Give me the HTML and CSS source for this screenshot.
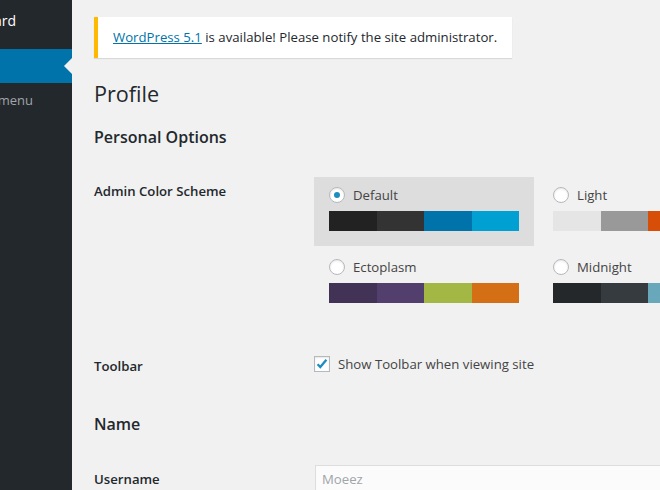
FILE: index.html
```html
<!DOCTYPE html>
<html lang="en">
  <head>
    <meta charset="UTF-8" />
    <title>Profile</title>
    <link rel="stylesheet" href="styles.css">
  </head>
  <body>
    <div class="layout">
      <div class="sidebar">
        <div class="menu-item">Dashboard</div>
        <div class="menu-item current">Profile</div>
        <div class="collapse">Collapse menu</div>
      </div>

      <div class="content">
        <div class="update-nag">
          <a href="#">WordPress 5.1</a> is available! Please notify the site administrator.
        </div>

        <h1>Profile</h1>

        <h2>Personal Options</h2>
        <table class="form-table">
          <tr>
            <th>Admin Color Scheme</th>
            <td>
              <div class="schemes">
                <div class="color-option selected">
                  <label class="option-label"><span class="radio checked"></span>Default</label>
                  <div class="palette">
                    <span style="background:#222"></span><span style="background:#333"></span><span style="background:#0073aa"></span><span style="background:#00a0d2"></span>
                  </div>
                </div>
                <div class="color-option">
                  <label class="option-label"><span class="radio"></span>Light</label>
                  <div class="palette">
                    <span style="background:#e5e5e5"></span><span style="background:#999"></span><span style="background:#d64e07"></span><span style="background:#04a4cc"></span>
                  </div>
                </div>
                <div class="color-option">
                  <label class="option-label"><span class="radio"></span>Blue</label>
                  <div class="palette">
                    <span style="background:#096484"></span><span style="background:#4796b3"></span><span style="background:#52accc"></span><span style="background:#74b6ce"></span>
                  </div>
                </div>
                <div class="color-option">
                  <label class="option-label"><span class="radio"></span>Coffee</label>
                  <div class="palette">
                    <span style="background:#46403c"></span><span style="background:#59524c"></span><span style="background:#c7a589"></span><span style="background:#9ea476"></span>
                  </div>
                </div>
                <div class="color-option">
                  <label class="option-label"><span class="radio"></span>Ectoplasm</label>
                  <div class="palette">
                    <span style="background:#413256"></span><span style="background:#523f6d"></span><span style="background:#a3b745"></span><span style="background:#d46f15"></span>
                  </div>
                </div>
                <div class="color-option">
                  <label class="option-label"><span class="radio"></span>Midnight</label>
                  <div class="palette">
                    <span style="background:#25282b"></span><span style="background:#363b3f"></span><span style="background:#69a8bb"></span><span style="background:#e14d43"></span>
                  </div>
                </div>
              </div>
            </td>
          </tr>
          <tr>
            <th>Toolbar</th>
            <td>
              <label class="check-label">
                <span class="checkbox">
                  <svg width="14" height="14" viewBox="0 0 14 14"><path d="M2.6 7.2l2.7 2.8 6.1-7.3" fill="none" stroke="#1e8cbe" stroke-width="2.3"/></svg>
                </span>
                Show Toolbar when viewing site
              </label>
            </td>
          </tr>
        </table>

        <h2 class="section-name">Name</h2>
        <table class="form-table">
          <tr>
            <th>Username</th>
            <td><div class="text-input">Moeez</div></td>
          </tr>
        </table>
      </div>
    </div>
  </body>
</html>
```

FILE: styles.css
```css
body {
  margin: 0;
  background-color: #f1f1f1;
  color: #444;
  font-family: "Open Sans", "Noto Sans", sans-serif;
  font-size: 13px;
  overflow: hidden;
}
.layout {
  display: flex;
  height: 490px;
}
.sidebar {
  flex: 0 0 72px;
  background-color: #23282d;
  overflow: hidden;
}
.menu-item {
  display: flex;
  justify-content: flex-end;
  white-space: nowrap;
  font-size: 14px;
  line-height: 18px;
  color: #fff;
  padding-right: 56px;
}
.menu-item:first-child {
  padding-top: 12px;
  height: 37px;
}
.menu-item.current {
  position: relative;
  height: 34px;
  background-color: #0073aa;
  color: #0073aa;
  align-items: center;
}
.menu-item.current::after {
  content: "";
  position: absolute;
  right: 0;
  top: 50%;
  margin-top: -8px;
  border: 8px solid transparent;
  border-right-color: #f1f1f1;
}
.collapse {
  display: flex;
  justify-content: flex-end;
  white-space: nowrap;
  margin-top: 8px;
  padding-right: 39px;
  line-height: 18px;
  color: #a0a5aa;
}
.content {
  flex: 1;
  padding-left: 22px;
  min-width: 0;
}
.update-nag {
  display: inline-block;
  margin-top: 17px;
  padding: 11px 15px;
  background-color: #fff;
  border-left: 4px solid #ffb900;
  box-shadow: 0 1px 1px 0 rgba(0, 0, 0, 0.1);
  font-size: 13.2px;
  line-height: 19px;
  color: #23282d;
}
.update-nag a {
  color: #0073aa;
}
h1 {
  margin: 0;
  padding: 21px 0 4px;
  font-size: 21.6px;
  font-weight: 400;
  line-height: 29px;
  color: #23282d;
}
h2 {
  margin: 14px 0 14px;
  font-size: 16px;
  font-weight: 600;
  line-height: 22px;
  color: #23282d;
}
h2.section-name {
  margin: 18px 0 15px;
}
.form-table {
  border-collapse: collapse;
}
.form-table th {
  width: 200px;
  min-width: 200px;
  padding: 20px 10px 20px 0;
  vertical-align: top;
  text-align: left;
  font-size: 13.2px;
  font-weight: 600;
  line-height: 18px;
  color: #23282d;
}
.form-table td {
  padding: 15px 10px;
  vertical-align: top;
  font-size: 13.2px;
  line-height: 20px;
}
.schemes {
  display: grid;
  grid-template-columns: repeat(4, 220px);
  column-gap: 4px;
  padding-bottom: 1px;
}
.color-option {
  padding: 5px 15px 15px;
  margin-bottom: 3px;
}
.color-option.selected {
  background-color: #ddd;
}
.option-label {
  display: flex;
  align-items: center;
  gap: 8px;
  height: 26px;
  margin-bottom: 3px;
}
.radio {
  width: 14px;
  height: 14px;
  border: 1px solid #b4b9be;
  border-radius: 50%;
  background-color: #fff;
  box-shadow: inset 0 1px 2px rgba(0, 0, 0, 0.1);
  display: flex;
  align-items: center;
  justify-content: center;
}
.radio.checked::before {
  content: "";
  width: 6px;
  height: 6px;
  border-radius: 50%;
  background-color: #1e8cbe;
}
.palette {
  display: flex;
  height: 20px;
  width: 190px;
}
.palette span {
  flex: 1;
}
.check-label {
  display: flex;
  align-items: center;
  gap: 8px;
  height: 24px;
  white-space: nowrap;
}
.checkbox {
  width: 14px;
  height: 14px;
  border: 1px solid #b4b9be;
  background-color: #fff;
  box-shadow: inset 0 1px 2px rgba(0, 0, 0, 0.1);
  display: flex;
  align-items: center;
  justify-content: center;
}
.text-input {
  margin-left: 1px;
  width: 400px;
  height: 26px;
  padding: 0 6px;
  border: 1px solid #ddd;
  background-color: #fbfbfb;
  color: #a0a5aa;
  line-height: 26px;
}
```
